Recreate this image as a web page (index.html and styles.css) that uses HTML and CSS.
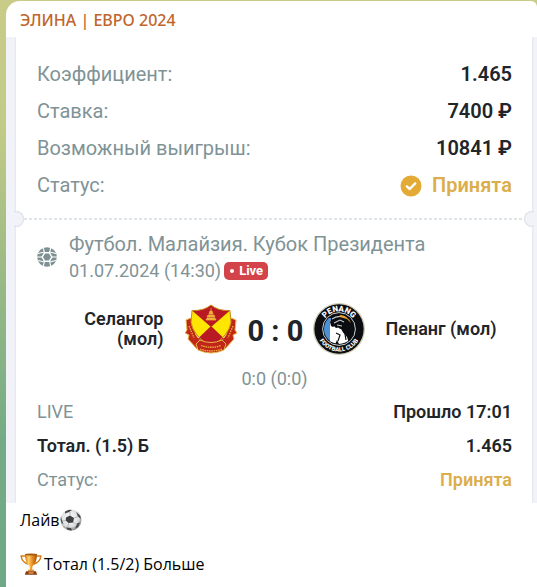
FILE: index.html
```html
<!DOCTYPE html>
<html lang="ru">
<head>
<meta charset="utf-8">
<meta name="viewport" content="width=device-width, initial-scale=1">
<title>ЭЛИНА | ЕВРО 2024</title>
<link rel="stylesheet" href="styles.css">
</head>
<body>
<article class="message">
  <header class="channel">ЭЛИНА | ЕВРО 2024</header>

  <section class="photo">
    <div class="ticket">
      <dl class="summary">
        <div class="row"><dt>Коэффициент:</dt><dd>1.465</dd></div>
        <div class="row"><dt>Ставка:</dt><dd>7400 ₽</dd></div>
        <div class="row"><dt>Возможный выигрыш:</dt><dd>10841 ₽</dd></div>
        <div class="row">
          <dt>Статус:</dt>
          <dd class="accepted">
            <svg class="check" viewBox="0 0 22 22" aria-hidden="true"><circle cx="11" cy="11" r="10.5" fill="#e3aa35"/><path d="M6.8 11.4 9.7 14l5.500-5.600" fill="none" stroke="#fff" stroke-width="2.4" stroke-linecap="round" stroke-linejoin="round"/></svg>
            Принята
          </dd>
        </div>
      </dl>

      <div class="tear">
        <svg class="tear-line" aria-hidden="true"><line x1="0" y1="1" x2="100%" y2="1" stroke="#d5dde2" stroke-width="1.4" stroke-dasharray="3 2"/></svg>
      </div>

      <div class="event">
        <svg class="sport" viewBox="0 0 20 20" aria-hidden="true">
          <circle cx="10" cy="10" r="9.8" fill="#7d9093"/>
          <path d="M7.600 5.800h4.800l2.400 4.200-2.400 4.200H7.600L5.200 10z" fill="none" stroke="#fff" stroke-width="1.400"/>
          <path d="M7.600 5.800 6 0M12.400 5.800 14 0M7.600 14.200 6 20M12.400 14.200 14 20M5.200 10H0M14.800 10H20M7.300 5 1 6.500M12.700 5 19 6.500M7.300 15 1 13.500M12.700 15 19 13.500" stroke="#fff" stroke-width="1.100" fill="none"/>
        </svg>
        <div>
          <div class="league">Футбол. Малайзия. Кубок Президента</div>
          <div class="when"><time datetime="2024-07-01T14:30">01.07.2024 (14:30)</time><span class="live">Live</span></div>
        </div>
      </div>

      <div class="match">
        <div class="team home">Селангор (мол)</div>
        <svg class="crest" viewBox="0 0 52 52" role="img" aria-label="Селангор">
          <g fill="#c02718" stroke="#e9b64a" stroke-width="1">
            <path d="M1 17l5-2 5 17 6 8-5 6-9-10 1-4-4-2 2-3z"/>
            <path d="M51 17l-5-2-5 17-6 8 5 6 9-10-1-4 4-2-2-3z"/>
          </g>
          <path d="M26 2q7 6 19 5.500l1 12q-2 13-20 24Q8 32.500 6 19.500l1-12Q19 8 26 2z" fill="#ffe600"/>
          <path d="M26 2q7 6 19 5.500L26 24 7 7.500Q19 8 26 2zM26 23 39 35.500 26 44 13 35.500z" fill="#b91922"/>
          <path d="M26 2q7 6 19 5.500l1 12q-2 13-20 24Q8 32.500 6 19.500l1-12Q19 8 26 2z" fill="none" stroke="#c78a24" stroke-width="1"/>
          <path d="M26 5v3M25 8h2l1 3h-4zM23 12h6l1 2h-8zM22 15h8l1 2h-10z" fill="#efb13a" stroke="#efb13a" stroke-width=".7"/>
          <path d="M11 41l4-4q11 5 22 0l4 4-2 6q-13 6-26 0z" fill="#c02718" stroke="#e9b64a" stroke-width="1"/>
          <path d="M16 42.500q10 3.500 20 0M15 46q11 4 22 0" fill="none" stroke="#efb13a" stroke-width="1.300" stroke-dasharray="1.600 .7"/>
          <path d="M4 23l5 12M48 23l-5 12" fill="none" stroke="#efb13a" stroke-width="1.300" stroke-dasharray="1.500 1"/>
        </svg>
        <div class="score">0 : 0</div>
        <svg class="crest" viewBox="0 0 52 52" role="img" aria-label="Пенанг">
          <defs>
            <path id="arc-top" d="M8.500 26a17.500 17.500 0 0 1 35 0"/>
            <path id="arc-bottom" d="M3.500 26a22.500 22.500 0 0 0 45 0"/>
            <clipPath id="inner"><circle cx="26" cy="26" r="15"/></clipPath>
          </defs>
          <circle cx="26" cy="26" r="25.300" fill="#0b0d10" stroke="#d0ccb4" stroke-width="1.300"/>
          <circle cx="26" cy="26" r="16.400" fill="#0b0d10" stroke="#c9cdcf" stroke-width="1"/>
          <g clip-path="url(#inner)">
            <path d="M10 15h8v27h-8z" fill="#4b90d2"/>
            <path d="M17 18l6-3v4l-3 3 3 3 5-1 2 5 4 5 3 9H27l-3-6-3 7h-4z" fill="#fff"/>
            <path d="M17 19q3-8 12-7 7 1 9 8l-5-3-4 3 3 5-5 1-4-4-3 2-2-1z" fill="#0b0d10"/>
            <path d="M19 16q5-4 13-2M21 20l6-3 4 2M24 22l5 1" fill="none" stroke="#c3c9cc" stroke-width="1.100"/>
            <path d="M27 12q7 0 11 8l-4-4-7-2z" fill="#f0a235"/>
            <path d="M28 25l4 6 1 6M23 30l4 2-2 6" fill="none" stroke="#0b0d10" stroke-width="1.200"/>
          </g>
          <text class="crest-name"><textPath href="#arc-top" startOffset="50%">PENANG</textPath></text>
          <text class="crest-club"><textPath href="#arc-bottom" startOffset="50%">FOOTBALL CLUB</textPath></text>
        </svg>
        <div class="team">Пенанг (мол)</div>
      </div>
      <div class="periods">0:0 (0:0)</div>

      <dl class="bet">
        <div class="row"><dt>LIVE</dt><dd>Прошло 17:01</dd></div>
        <div class="row"><dt class="pick">Тотал. (1.5) Б</dt><dd>1.465</dd></div>
        <div class="row"><dt>Статус:</dt><dd class="accepted">Принята</dd></div>
      </dl>
    </div>
  </section>

  <div class="caption">
    <p>Лайв<svg class="emoji" viewBox="0 0 22 22" role="img" aria-label="Футбольный мяч">
      <defs>
        <radialGradient id="ball" cx=".45" cy=".4" r=".6"><stop offset="0" stop-color="#fff"/><stop offset=".7" stop-color="#dedede"/><stop offset="1" stop-color="#858585"/></radialGradient>
      </defs>
      <circle cx="11" cy="11" r="10.500" fill="url(#ball)"/>
      <path d="M6 8.500l4-2 4 2.500-.8 4.500-4.700.5L5.700 11.500z" fill="#3d4043"/>
      <path d="M5 2.500l4-1.800 3 .2-3 2.200-4 1.400zM16 3l4 3.500 1 3.500-3-2.500zM1 7l.8 4L3.500 15l-2-1L.5 10.500zM6 18.500l5 .5 1 2.500-4-.5zM17.500 14l2.500-.5-2 4.500-3 1.500z" fill="#45484b"/>
      <path d="M10 6.500V3M14 9l4-1.500M13.200 13.500l4 2M8.500 14l-.5 4.500M5.700 11.500L2 12" stroke="#999" stroke-width=".6" fill="none"/>
    </svg></p>
    <p class="tip"><svg class="emoji" viewBox="0 0 22 22" role="img" aria-label="Кубок">
      <defs>
        <linearGradient id="gold"><stop offset="0" stop-color="#d17511"/><stop offset=".3" stop-color="#ffd16b"/><stop offset=".55" stop-color="#f09a24"/><stop offset="1" stop-color="#a95008"/></linearGradient>
      </defs>
      <path d="M6 3H1.200q.3 6 7.300 8.200M16 3h4.800q-.3 6-7.300 8.200" fill="none" stroke="#d47c16" stroke-width="1.500"/>
      <path d="M5 1h12q0 9-4.500 12l-.5 4h-2l-.5-4Q5 10 5 1z" fill="url(#gold)"/>
      <ellipse cx="11" cy="1.500" rx="6" ry="1" fill="#a65a12"/>
      <path d="M8.500 16.500h5l1 1.800h-7z" fill="#e6952c"/>
      <path d="M6 18.200h10l1.200 3.500H4.800z" fill="#8a3b16"/>
      <path d="M8.500 19.200h5v1.400h-5z" fill="#e8a33a"/>
    </svg>Тотал (1.5/2) Больше</p>
  </div>
</article>
</body>
</html>
```
FILE: styles.css
```css
* {
  box-sizing: border-box;
}

body {
  margin: 0;
  min-height: 100vh;
  padding: 1px 0 0 6px;
  background: linear-gradient(#c8cc88 0%, #c2cb86 22%, #9dbb85 45%, #74ab86 75%, #6fa886 100%);
  font-family: "Open Sans", "Noto Sans", sans-serif;
  font-size: 16px;
  color: #000;
}

dl, dd, p {
  margin: 0;
}

.message {
  min-height: calc(100vh - 1px);
  background: #fff;
  border-radius: 14px 6px 0 0;
  overflow: hidden;
}

.channel {
  height: 36px;
  padding: 8px 14px 0;
  line-height: 22px;
  font-family: "Noto Sans", "Open Sans", sans-serif;
  font-weight: 500;
  color: #c0662c;
}

.photo {
  padding: 0 5px 0 10px;
  background: #f1f3f9;
  font-family: Roboto, sans-serif;
  color: #212529;
  overflow: hidden;
}

.ticket {
  padding: 19px 20px 6px 21px;
  background: #fff;
  box-shadow: 0 0 2px #cdd4dc;
}

.row {
  display: flex;
  justify-content: space-between;
  align-items: center;
}

.row dt {
  color: #7f9396;
}

.row dd {
  font-weight: 600;
}

.summary {
  font-size: 20px;
  line-height: 37px;
}

.bet {
  font-size: 18px;
  line-height: 34px;
}

.row .pick {
  font-weight: 600;
  color: #212529;
}

.row .accepted {
  display: flex;
  align-items: center;
  gap: 10px;
  color: #dcae4b;
}

.check {
  width: 22px;
  height: 22px;
}

.tear {
  display: flex;
  align-items: center;
  justify-content: space-between;
  height: 16px;
  margin: 7px -28px 3px -29px;
}

.tear::before,
.tear::after {
  content: "";
  width: 16px;
  height: 16px;
  border-radius: 50%;
  background: #f1f3f9;
  box-shadow: inset 0 0 2px #b9c1c9;
}

.tear::before {
  clip-path: inset(0 0 0 6px);
}

.tear::after {
  clip-path: inset(0 6px 0 0);
}

.tear-line {
  flex: 1;
  height: 2px;
}

.event {
  display: flex;
  align-items: center;
  gap: 12px;
  color: #7f9396;
}

.sport {
  width: 20px;
  height: 20px;
}

.league {
  font-size: 20px;
  line-height: 28px;
}

.when {
  display: flex;
  align-items: center;
  gap: 3px;
  font-size: 18px;
  line-height: 26px;
}

.live {
  display: flex;
  align-items: center;
  gap: 5px;
  height: 18px;
  padding: 0 5px 0 6px;
  border-radius: 5px;
  background: #d3444a;
  color: #fff;
  font-size: 13px;
  font-weight: 700;
}

.live::before {
  content: "";
  width: 4px;
  height: 4px;
  border-radius: 50%;
  background: #fff;
}

.match {
  display: grid;
  grid-template-columns: 1fr 52px 54px 52px 1fr;
  align-items: center;
  column-gap: 11px;
  margin-top: 19px;
}

.team {
  padding: 0 10px;
  font-size: 18px;
  line-height: 20px;
  font-weight: 600;
}

.home {
  justify-self: end;
  width: 110px;
  text-align: right;
}

.crest {
  width: 52px;
  height: 52px;
}

.crest-name,
.crest-club {
  font-family: Roboto, sans-serif;
  font-weight: 900;
  text-anchor: middle;
  fill: #fff;
}

.crest-name {
  font-size: 8px;
}

.crest-club {
  font-size: 6px;
}

.score {
  font-size: 29px;
  font-weight: 700;
  line-height: 36px;
  padding-top: 3px;
  text-align: center;
  white-space: nowrap;
}

.periods {
  margin: 12px 0 4px;
  font-size: 18px;
  line-height: 24px;
  text-align: center;
  color: #7f9396;
}

.caption {
  padding: 6px 14px 0;
  line-height: 22px;
}

.caption p {
  display: flex;
  align-items: center;
}

.caption .tip {
  margin-top: 22px;
}

.emoji {
  width: 22px;
  height: 22px;
}

.tip .emoji {
  margin-right: 2px;
}
```
